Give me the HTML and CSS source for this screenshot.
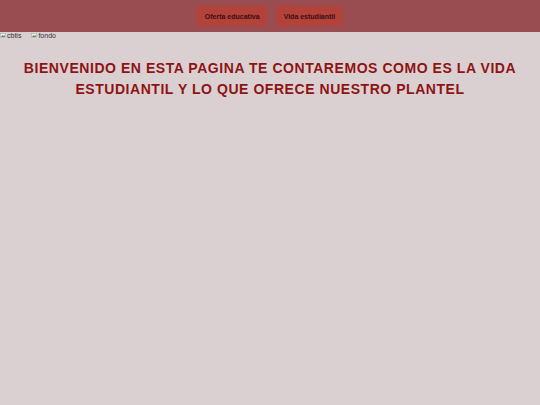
FILE: index.html
```html
<!DOCTYPE html>
<html lang="es">
<head>
<meta charset="utf-8">
<title>CBTIS</title>
<link rel="stylesheet" href="styles.css">
</head>
<body>
<header class="topbar">
  <nav class="nav">
    <a class="nav-btn" href="#">Oferta educativa</a>
    <a class="nav-btn" href="#">Vida estudiantil</a>
  </nav>
</header>
<div class="imgs">
  <span class="pic"><svg class="broken" width="6" height="5" viewBox="0 0 6 5"><rect x="0.5" y="0.5" width="5" height="4" fill="#eee" stroke="#aaa" stroke-width="0.6"/><path d="M1 4 L2.5 2 L3.5 3 L4.5 2 L5 4 Z" fill="#4a9a3a"/></svg>cbtis</span>
  <span class="pic"><svg class="broken" width="6" height="5" viewBox="0 0 6 5"><rect x="0.5" y="0.5" width="5" height="4" fill="#eee" stroke="#aaa" stroke-width="0.6"/><path d="M1 4 L2.5 2 L3.5 3 L4.5 2 L5 4 Z" fill="#4a9a3a"/></svg>fondo</span>
</div>
<h1 class="title">BIENVENIDO EN ESTA PAGINA TE CONTAREMOS COMO ES LA VIDA ESTUDIANTIL Y LO QUE OFRECE NUESTRO PLANTEL</h1>
</body>
</html>
```
FILE: styles.css
```css
html, body {
  margin: 0;
  padding: 0;
}
body {
  background: #dbd0d1;
  font-family: "Liberation Sans", Arial, sans-serif;
  min-height: 405px;
}
.topbar {
  background: #9a4d50;
  height: 32px;
  display: flex;
  justify-content: center;
  align-items: flex-start;
}
.nav {
  display: flex;
  gap: 9px;
  padding-top: 6px;
}
.nav-btn {
  display: flex;
  align-items: center;
  justify-content: center;
  height: 20px;
  padding: 0 7.5px;
  background: #b3423b;
  color: #3a0f10;
  border-radius: 3px;
  font-size: 7px;
  font-weight: bold;
  text-decoration: none;
}
.imgs {
  display: flex;
  gap: 10px;
  font-size: 7px;
  line-height: 7px;
  color: #333;
  height: 7px;
}
.pic {
  display: inline-flex;
  align-items: center;
  gap: 1px;
}
.broken {
  display: block;
}
.title {
  margin: 19px 0 0;
  text-align: center;
  color: #8e1414;
  font-size: 14px;
  line-height: 21px;
  letter-spacing: 0.55px;
  font-weight: bold;
}
```
